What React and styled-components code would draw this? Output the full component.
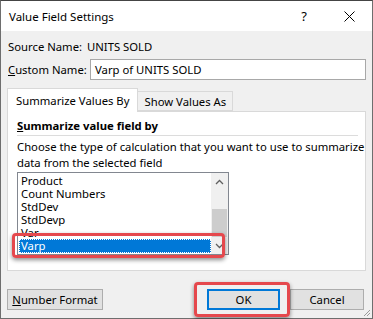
import React from "react";
import styled, { createGlobalStyle } from "styled-components";

const GlobalStyle = createGlobalStyle`
  html, body {
    margin: 0;
    padding: 0;
    background: #f0f0f0;
  }
  body {
    font-family: "Noto Sans", "Liberation Sans", sans-serif;
    font-size: 11.3px;
    color: #000;
  }
`;

const Dialog = styled.div`
  width: 373px;
  height: 319px;
  box-sizing: border-box;
  border: 1px solid #6e6e6e;
  border-top-color: #444;
  background: #f0f0f0;
  display: flex;
  flex-direction: column;
  position: relative;
`;

const TitleBar = styled.div`
  height: 30px;
  background: #fff;
  display: flex;
  align-items: center;
  padding-left: 8px;
  font-size: 11.5px;
`;

const Title = styled.div`
  flex: 1;
`;

const Help = styled.div`
  width: 20px;
  margin-right: 25px;
  text-align: center;
  font-size: 13px;
`;

const Close = styled.div`
  width: 20px;
  margin-right: 13px;
  display: flex;
  justify-content: center;
`;

const Body = styled.div`
  flex: 1;
  display: flex;
  flex-direction: column;
  padding: 7px 6px 0 6px;
`;

const Row = styled.div`
  display: flex;
  align-items: center;
  height: ${(p) => p.h || 16}px;
  margin-top: ${(p) => p.mt || 0}px;
  padding-left: 1px;
`;

const Label = styled.span`
  width: 79px;
  white-space: nowrap;
`;

const Input = styled.div`
  flex: 1;
  height: 21px;
  box-sizing: border-box;
  border: 1px solid #a8a8a8;
  background: #fff;
  display: flex;
  align-items: center;
  padding-left: 4px;
  margin-left: 3px;
`;

const Tabs = styled.div`
  display: flex;
  align-items: flex-end;
  margin-top: 8px;
  height: 23px;
  position: relative;
  z-index: 1;
`;

const Tab = styled.div`
  box-sizing: border-box;
  height: ${(p) => (p.active ? 24 : 20)}px;
  padding: 0 ${(p) => (p.active ? 8 : 6)}px;
  border: 1px solid #d9d9d9;
  border-bottom: ${(p) => (p.active ? "none" : "1px solid #d9d9d9")};
  border-left: ${(p) => (p.active ? "1px solid #d9d9d9" : "none")};
  background: ${(p) => (p.active ? "#fff" : "#f0f0f0")};
  display: flex;
  align-items: center;
  white-space: nowrap;
  padding-top: ${(p) => (p.active ? 0 : 1)}px;
  margin-bottom: ${(p) => (p.active ? -1 : 0)}px;
`;

const Panel = styled.div`
  height: 160px;
  box-sizing: border-box;
  border: 1px solid #d9d9d9;
  background: #fff;
  padding: 6px 7px 0 9px;
  display: flex;
  flex-direction: column;
`;

const Heading = styled.div`
  font-weight: bold;
  line-height: 16px;
  padding-bottom: 1px;
  border-bottom: 1px solid #dcdcdc;
`;

const Desc = styled.div`
  margin-top: 3px;
  line-height: 16px;
  white-space: nowrap;
`;

const ListBox = styled.div`
  flex: none;
  margin-top: 1px;
  width: 212px;
  height: 83px;
  box-sizing: border-box;
  border: 1px solid #828790;
  display: flex;
  overflow: hidden;
`;

const Items = styled.div`
  flex: 1;
  padding: 1px 0 0 1px;
  display: flex;
  flex-direction: column;
`;

const Item = styled.div`
  flex: none;
  height: ${(p) => (p.selected ? 14 : 13)}px;
  line-height: ${(p) => (p.selected ? 14 : 13)}px;
  padding-left: 2px;
  white-space: nowrap;
  overflow: hidden;
  box-sizing: border-box;
  background: ${(p) => (p.selected ? "#0078d7" : "transparent")};
  color: ${(p) => (p.selected ? "#fff" : "#000")};
  outline: ${(p) => (p.selected ? "1px dotted #fff" : "none")};
  outline-offset: -1px;
`;

const Scroll = styled.div`
  width: 17px;
  background: #f0f0f0;
  display: flex;
  flex-direction: column;
  align-items: center;
`;

const Arrow = styled.div`
  height: 17px;
  display: flex;
  align-items: center;
  justify-content: center;
`;

const Track = styled.div`
  flex: 1;
  width: 100%;
  display: flex;
  flex-direction: column;
  justify-content: flex-end;
`;

const Thumb = styled.div`
  height: 28px;
  margin: 0 1px;
  background: #cdcdcd;
`;

const Highlight = styled.div`
  position: absolute;
  box-sizing: border-box;
  border: 3px solid #e5484d;
  border-radius: 4px;
  box-shadow: 0 2px 4px rgba(0, 0, 0, 0.45);
  pointer-events: none;
`;

const Footer = styled.div`
  display: flex;
  align-items: center;
  margin-top: 18px;
`;

const Button = styled.div`
  width: ${(p) => p.w || 74}px;
  height: 21px;
  box-sizing: border-box;
  border: ${(p) => (p.primary ? "2px solid #0078d7" : "1px solid #adadad")};
  background: #e1e1e1;
  display: flex;
  align-items: center;
  justify-content: center;
  margin-left: ${(p) => p.ml || 0}px;
`;

const Grip = styled.svg`
  position: absolute;
  right: 1px;
  bottom: 1px;
`;

const Chevron = ({ up }) => (
  <svg width="9" height="6" viewBox="0 0 9 6">
    <path
      d={up ? "M1 5 L4.5 1.5 L8 5" : "M1 1 L4.5 4.5 L8 1"}
      fill="none"
      stroke="#606060"
      strokeWidth="1.3"
    />
  </svg>
);

const items = ["Product", "Count Numbers", "StdDev", "StdDevp", "Var"];

export default function App() {
  return (
    <>
      <GlobalStyle />
      <Dialog>
        <TitleBar>
          <Title>Value Field Settings</Title>
          <Help>?</Help>
          <Close>
            <svg width="11" height="11" viewBox="0 0 11 11">
              <path d="M0.5 0.5 L10.5 10.5 M10.5 0.5 L0.5 10.5" stroke="#000" strokeWidth="1" />
            </svg>
          </Close>
        </TitleBar>
        <Body>
          <Row h={16}>
            <Label>Source Name:</Label>
            <span>UNITS SOLD</span>
          </Row>
          <Row h={21} mt={5}>
            <Label>
              <u>C</u>ustom Name:
            </Label>
            <Input>Varp of UNITS SOLD</Input>
          </Row>
          <Tabs>
            <Tab active>Summarize Values By</Tab>
            <Tab>Show Values As</Tab>
          </Tabs>
          <Panel>
            <Heading>
              <u>S</u>ummarize value field by
            </Heading>
            <Desc>
              Choose the type of calculation that you want to use to summarize
              <br />
              data from the selected field
            </Desc>
            <ListBox>
              <Items>
                {items.map((it) => (
                  <Item key={it}>{it}</Item>
                ))}
                <Item selected>Varp</Item>
              </Items>
              <Scroll>
                <Arrow>
                  <Chevron up />
                </Arrow>
                <Track>
                  <Thumb />
                </Track>
                <Arrow>
                  <Chevron />
                </Arrow>
              </Scroll>
            </ListBox>
          </Panel>
          <Footer>
            <Button w={96}>
              <span>
                <u>N</u>umber Format
              </span>
            </Button>
            <Button primary ml={104} w={73}>
              OK
            </Button>
            <Button ml={10}>Cancel</Button>
          </Footer>
        </Body>
        <Highlight style={{ left: 11, top: 232, width: 213, height: 25 }} />
        <Highlight style={{ left: 193, top: 281, width: 96, height: 35 }} />
        <Grip width="10" height="10" viewBox="0 0 10 10">
          <path d="M9 3 L3 9 M9 6 L6 9" stroke="#9a9a9a" strokeWidth="1" />
        </Grip>
      </Dialog>
    </>
  );
}
